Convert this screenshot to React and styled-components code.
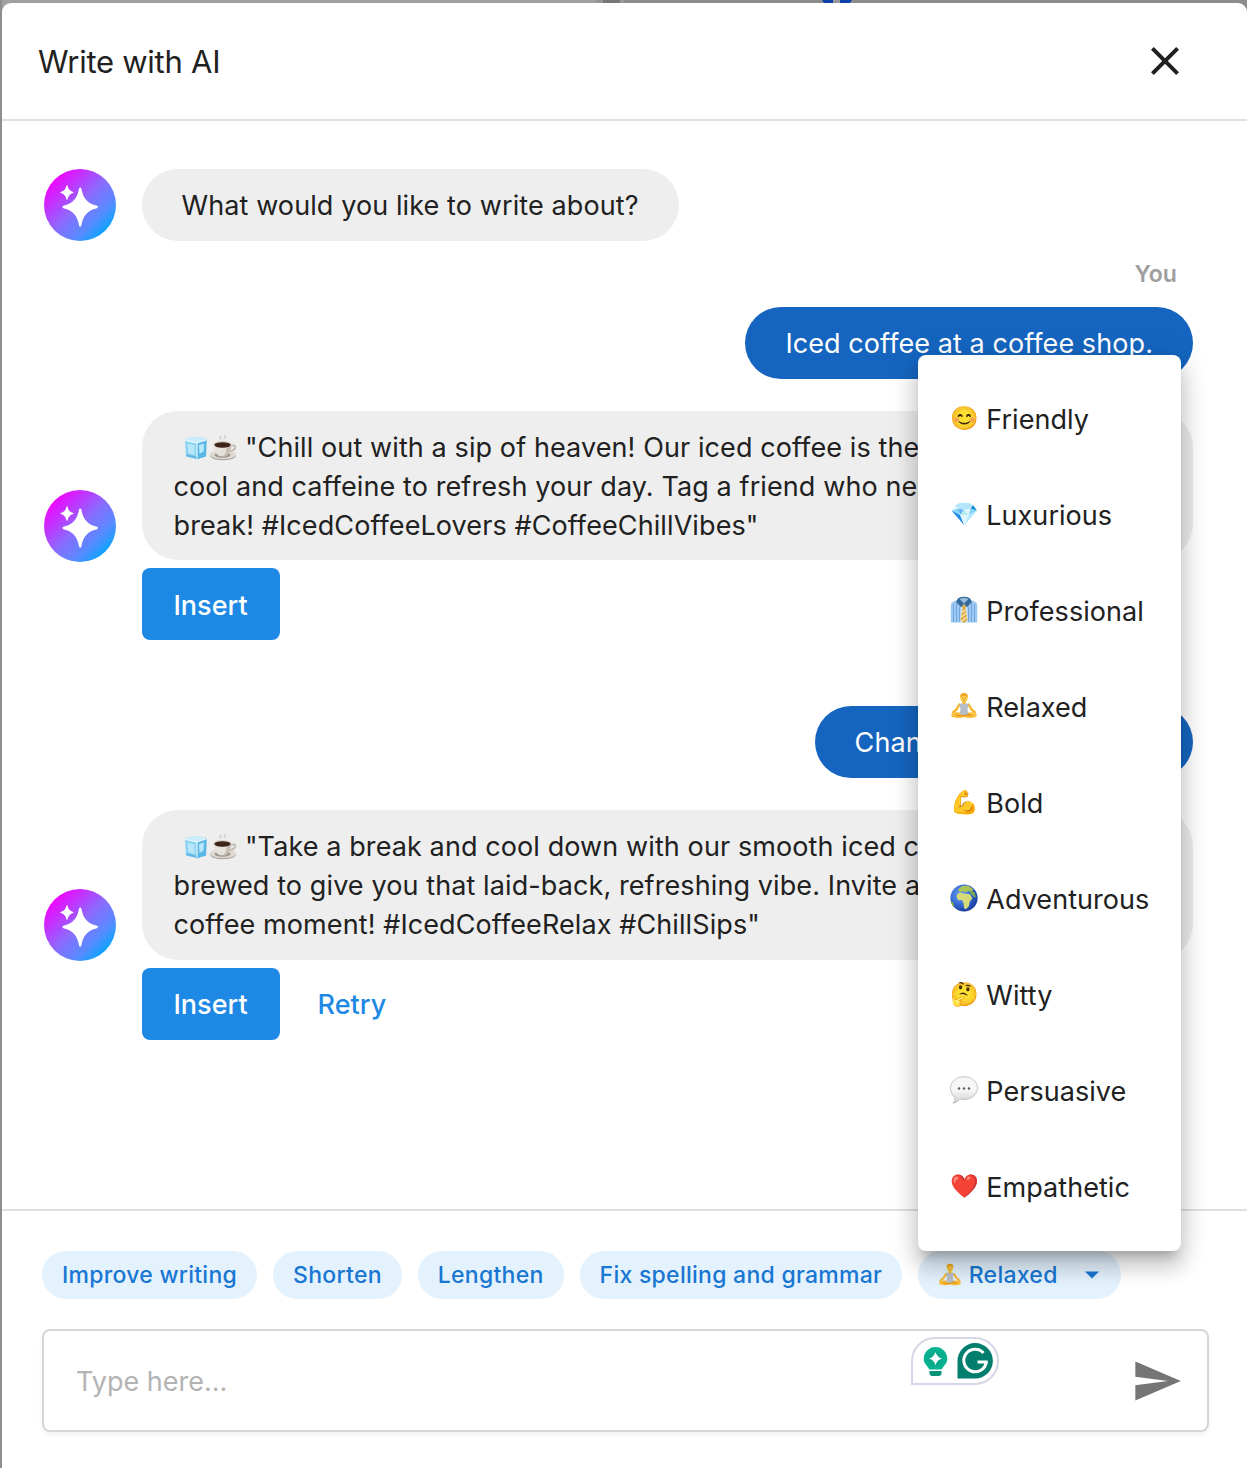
import React from "react";
import styled, { createGlobalStyle } from "styled-components";

const GlobalStyle = createGlobalStyle`
  * { box-sizing: border-box; }
  body {
    margin: 0;
    font-family: Inter, "Noto Color Emoji", sans-serif;
    color: #212121;
    overflow: hidden;
  }
  button { font: inherit; border: 0; cursor: pointer; }
`;

const Backdrop = styled.div`
  height: 1468px;
  padding: 3px 0 0 2px;
  background:
    linear-gradient(#999, #999) 833px 0 / 7px 3px no-repeat,
    radial-gradient(circle at 837px -9px, #0b41a8 17px, transparent 18px),
    linear-gradient(90deg, #8e8e8e 0 2px, #a0a0a0 2px 596px, #959595 596px 603px, #777 603px 620px, #989898 620px 624px, #8c8c8c 624px);
`;

const Dialog = styled.section`
  display: flex;
  flex-direction: column;
  height: 100%;
  background: #fff;
  border-radius: 9px 9px 0 0;
  overflow: hidden;
`;

const Header = styled.header`
  display: flex;
  align-items: center;
  justify-content: space-between;
  height: 118px;
  padding: 0 58px 0 36px;
  border-bottom: 2px solid #e0e0e0;
`;

const Title = styled.h1`
  margin: 0;
  font-size: 31px;
  font-weight: 400;
  letter-spacing: -0.26px;
`;

const CloseButton = styled.button`
  display: flex;
  padding: 0;
  background: none;
  color: #212121;
`;

const Thread = styled.main`
  flex: 1;
  display: flex;
  flex-direction: column;
  padding: 48px 54px 0 41.5px;
`;

const BotRow = styled.div`
  display: flex;
  align-items: center;
  gap: 26px;
  margin-top: ${(p) => (p.$first ? 0 : 32)}px;
`;

const BotColumn = styled.div`
  display: flex;
  flex-direction: column;
  align-items: flex-start;
  flex: 1;
`;

const Bubble = styled.div`
  align-self: ${(p) => (p.$wide ? "stretch" : "flex-start")};
  padding: ${(p) => (p.$wide ? "17px 32px 15.4px" : "16.5px 40px")};
  border-radius: 36px;
  background: #eee;
  font-size: 27px;
  line-height: 39px;
  letter-spacing: 0.1px;
  white-space: pre;
`;

const UserGroup = styled.div`
  display: flex;
  flex-direction: column;
  align-items: flex-end;
`;

const Sender = styled.div`
  height: 66px;
  padding-right: 16px;
  font-size: 23px;
  font-weight: 600;
  line-height: 66px;
  letter-spacing: 0.1px;
  color: #9e9e9e;
`;

const UserBubble = styled.div`
  padding: 2px 40px 0;
  border-radius: 36px;
  background: #1565c0;
  color: #fff;
  font-size: 27px;
  line-height: 70px;
  letter-spacing: 0.08px;
`;

const Actions = styled.div`
  display: flex;
  gap: 6px;
  margin-top: 8px;
`;

const ActionButton = styled.button`
  && {
    height: 72px;
    padding: 2.4px 32px 0;
    border-radius: 8px;
    background: ${(p) => (p.$primary ? "#1e88e5" : "transparent")};
    color: ${(p) => (p.$primary ? "#fff" : "#1e88e5")};
    font-size: 27px;
    font-weight: 500;
  }
`;

const Emoji = styled.span`
  display: inline-block;
  width: 28px;
  font-family: "Noto Color Emoji", sans-serif;
  font-size: 23px;
  line-height: 1;
  letter-spacing: 0;
  text-align: center;
`;

const Glyph = styled.svg`
  flex: none;
  width: ${(p) => p.$size}px;
  height: ${(p) => p.$size}px;
  vertical-align: ${(p) => p.$drop || 0}px;
`;

const Footer = styled.footer`
  height: 259px;
  padding: 40px 38px 0 40px;
  border-top: 2px solid #e0e0e0;
`;

const Chips = styled.div`
  display: flex;
  gap: 16px;
`;

const Chip = styled.button`
  && {
    display: flex;
    align-items: center;
    height: 48px;
    padding: 0 ${(p) => (p.$select ? 22 : 20)}px 0 20px;
    border-radius: 24px;
    background: #e3f2fd;
    color: #1976d2;
    font-size: 23px;
    font-weight: 500;
    letter-spacing: 0.27px;
    white-space: nowrap;
  }
`;

const ToneLabel = styled.span`
  margin: 0 27px 0 6.5px;
`;

const ToneSelect = styled.div`
  position: relative;
`;

const Menu = styled.ul`
  position: absolute;
  left: 0;
  bottom: 100%;
  width: 263px;
  margin: 0;
  padding: 16px 0;
  list-style: none;
  background: #fff;
  border-radius: 8px;
  box-shadow:
    0 10px 10px -6px rgba(0, 0, 0, 0.2),
    0 16px 20px 2px rgba(0, 0, 0, 0.14),
    0 6px 28px 4px rgba(0, 0, 0, 0.12);
`;

const MenuItem = styled.li`
  display: flex;
  align-items: center;
  gap: 8px;
  height: 96px;
  padding: 0 24px 0 32px;
  font-size: 27px;
  letter-spacing: 0.05px;

  ${Emoji}, ${Glyph} {
    margin-bottom: 2px;
  }
`;

const Composer = styled.div`
  position: relative;
  display: flex;
  align-items: center;
  justify-content: space-between;
  height: 103px;
  margin-top: 30px;
  padding: 0 24px 0 32px;
  border: 2px solid #d6d6d6;
  border-radius: 8px;
  box-shadow: 0 3px 5px rgba(0, 0, 0, 0.05);
`;

const Placeholder = styled.span`
  padding-top: 1px;
  font-size: 27px;
  color: #b3b3b3;
`;

const Assistant = styled.div`
  position: absolute;
  left: 867px;
  top: 6px;
  display: flex;
  width: 88px;
  height: 48px;
  border: 2px solid #d5d7e6;
  border-radius: 24px 24px 24px 0;
  background: #fff;
`;

function Avatar({ id }) {
  return (
    <svg width="72" height="72" viewBox="0 0 72 72">
      <defs>
        <linearGradient id={id} x1="0.12" y1="0.12" x2="0.88" y2="0.88">
          <stop offset="0" stopColor="#f500ff" />
          <stop offset="0.5" stopColor="#8a6cff" />
          <stop offset="0.78" stopColor="#568cff" />
          <stop offset="1" stopColor="#00a8ff" />
        </linearGradient>
      </defs>
      <circle cx="36" cy="36" r="36" fill={`url(#${id})`} />
      <path
        fill="#fff"
        d="M35.1 19.2Q36.2 17.6 37.3 19.2C39 29 43 34.4 53 36.8Q55 38 53 39.2C43 41.4 39 47 37.3 56.8Q36.2 58.6 35.1 56.8C33.4 47 29.4 41.4 19.4 39.2Q17.4 38 19.4 36.8C29.4 34.4 33.4 29 35.1 19.2Z"
      />
      <path
        fill="#fff"
        d="M22.5 16.6Q23 15.8 23.5 16.6C24.3 20.4 26 22.2 29.2 23Q30.2 23.5 29.2 24C26 24.8 24.3 26.8 23.5 30.4Q23 31.2 22.5 30.4C21.7 26.8 20 24.8 16.8 24Q15.8 23.5 16.8 23C20 22.2 21.7 20.4 22.5 16.6Z"
      />
    </svg>
  );
}

const CloseIcon = () => (
  <svg width="48" height="48" viewBox="0 0 24 24" fill="currentColor">
    <path d="M19 6.41L17.59 5 12 10.59 6.41 5 5 6.41 10.59 12 5 17.59 6.41 19 12 13.41 17.59 19 19 17.59 13.41 12z" />
  </svg>
);

const SendIcon = () => (
  <svg width="52" height="52" viewBox="0 0 24 24" fill="#757575">
    <path d="M2.01 21L23 12 2.01 3 2 10l15 2-15 2z" />
  </svg>
);

const CaretIcon = () => (
  <svg width="14" height="8" viewBox="0 0 14 8" fill="#1976d2">
    <path d="M0 0.5h14l-7 7z" />
  </svg>
);

const IceIcon = () => (
  <Glyph $size={28} $drop={-5} viewBox="-1 0 28 28" role="img" aria-label="🧊">
    <path fill="#8dd4f3" d="M3.500 5Q13 2.500 24 4.500l.8 1-.8 17L15 25.200 4 22.500 2.900 6Z" />
    <path fill="#c9edfb" d="M3.500 5Q13 2.500 24 4.500l.5 1.500-9.500 3L3 6.500Z" />
    <path fill="#5ab6e5" d="M15 9l9.500-3-.5 16.500-9 2.700Z" />
    <path fill="#b6e8fa" d="M5.500 9.500l7 2v9.500l-6-1.800ZM17 11l5-1.500-.4 8L17.500 20Z" />
    <path fill="none" stroke="#e9fafe" strokeWidth="1.100" d="M3.500 6.500L15 9v15.500M15 9l9-3" />
    <path fill="#4da9dc" d="M4.500 20l10 2.500v2.200L4.200 22.300Z" opacity=".65" />
  </Glyph>
);

const CoffeeIcon = () => (
  <Glyph $size={28} $drop={-5} viewBox="0 -1 28 28" role="img" aria-label="☕">
    <path fill="none" stroke="#d0cfce" strokeWidth="1.400" d="M12.500 4.500q-3-2 0-3.500M14.500 4q3-2 .5-4" />
    <ellipse cx="14" cy="20.500" rx="13" ry="4.800" fill="#b2aaa1" />
    <ellipse cx="14" cy="19.500" rx="13" ry="4.500" fill="#dfdad3" />
    <ellipse cx="13.500" cy="20" rx="8" ry="2.800" fill="#9e958c" />
    <path fill="none" stroke="#c4bdb4" strokeWidth="2" d="M22 11q5-1.500 4.300 1.500-.8 3-6 3.500" />
    <path fill="#e5e1db" d="M4.500 9.500C5 15 7 20 11 21.200h5C20 20 22 15 22.600 9.500Z" />
    <path fill="#c5beb5" d="M17.500 13C17.500 17 16 20 13.500 21.200H16C20 20 22 15 22.600 9.500Z" />
    <ellipse cx="13.500" cy="9.500" rx="9.100" ry="3.500" fill="#d8d2ca" />
    <ellipse cx="13.500" cy="10" rx="8.100" ry="2.700" fill="#3d2318" />
  </Glyph>
);

const LotusIcon = ({ size }) => (
  <Glyph $size={size} viewBox="0 0 28 28" role="img" aria-label="🧘">
    <g fill="none" stroke="#f5b72f" strokeWidth="2.400" strokeLinecap="round" strokeLinejoin="round">
      <path d="M9.500 12.500L6.500 17.500 3 20.500M18.500 12.500l3 5 3.500 3" />
    </g>
    <path fill="#fbbd35" d="M2 22c4-2.500 8-2 12-.2 4-1.800 8-2.300 12 .2q2 1.500-.5 3C20 26.500 17 26 14 25c-3 1-6 1.500-11.500 0Q0 23.500 2 22Z" />
    <path fill="#b9bdc5" d="M9.300 12.500Q11 11 14 11t4.700 1.500L17.500 17l.8 5q-4.300 2.200-8.600 0l.8-5Z" />
    <path fill="none" stroke="#cf7e1b" strokeWidth=".8" d="M6 23q8 2.400 13-1M22 23.500l-5-1" />
    <path fill="#f5b72f" d="M12.200 8h3.600v3.300q-1.800 1.500-3.600 0Z" />
    <ellipse cx="14" cy="5.800" rx="3.700" ry="4.300" fill="#ffce4a" />
    <path fill="#eea61e" d="M10.200 5.500Q9.600 1 14 .900T17.800 5.500Q16 3.700 14 3.800T10.200 5.500Z" />
    <path fill="none" stroke="#8f5511" strokeWidth=".6" d="M12 6h1.200M14.800 6H16M13 8.300h2" />
  </Glyph>
);

const ShirtIcon = () => (
  <Glyph $size={28} viewBox="0 0 28 28" role="img" aria-label="👔">
    <path fill="#9cc8f2" d="M8 3.500h12l5.500 2.500Q27.300 7 27.300 10v16.500H.8V10Q.8 7 2.500 6Z" />
    <path fill="none" stroke="#72a6df" d="M3.500 8v18M6.500 6v20M9.500 11v15M18.500 11v15M21.500 6v20M24.500 8v18" />
    <path fill="#cfe5f8" d="M10.800 11h6.400l.8 15.500H10Z" />
    <path fill="#e0aa42" d="M12 8.500h4l-.5 4 2 11.500L14 27l-3.500-3 2-11.500Z" />
    <path stroke="#faeabb" strokeWidth="1.300" d="M12 16.500l3.500-2.500M11.500 21l5-4M12 25l5-4" />
    <path fill="#35699b" d="M8 2.200Q14-.500 20 2.200L21.800 6 17 11.200 14 7.800 11 11.200 6.200 6Z" />
    <path fill="#99bfdc" d="M9.500 3Q14 .900 18.500 3L14 7.500Z" />
  </Glyph>
);

const SpeechIcon = () => (
  <Glyph $size={28} viewBox="0 0 28 28" role="img" aria-label="💬">
    <defs>
      <linearGradient id="speech" x1="0" y1="0" x2="0" y2="1">
        <stop offset="0.500" stopColor="#f7f7f8" />
        <stop offset="1" stopColor="#cfcfd3" />
      </linearGradient>
    </defs>
    <path
      fill="url(#speech)"
      stroke="#bdbdc1"
      strokeWidth=".9"
      d="M14 .7C21.500 .7 27.500 5.700 27.500 12S21.500 23.500 14 23.500q-2.200 0-4.300-.6Q7 27 3 27.200 5.300 24.800 5 21.500 .5 17.800 .5 12C.5 5.700 6.500 .7 14 .7Z"
    />
    <g fill="#5c5c62">
      <circle cx="9" cy="12.500" r="1.200" />
      <circle cx="14" cy="12.500" r="1.200" />
      <circle cx="19" cy="12.500" r="1.200" />
    </g>
  </Glyph>
);

const GlobeIcon = () => (
  <Glyph $size={28} viewBox="0 0 28 28" role="img" aria-label="🌍">
    <defs>
      <radialGradient id="globe" cx="0.38" cy="0.36" r="0.65">
        <stop offset="0" stopColor="#6ba5f5" />
        <stop offset="0.600" stopColor="#3568d2" />
        <stop offset="1" stopColor="#1d3f9f" />
      </radialGradient>
    </defs>
    <circle cx="14" cy="14" r="13.600" fill="url(#globe)" />
    <path fill="#a9c354" d="M8 5.500l4-3.500 6-.4 5 3.400-1 3-4-1-2 1.500-3-1.500-3 1.500Z" />
    <path fill="#d5d978" d="M6.500 12.500Q7 9 11 8.700l5 1.100 4 .4 2.300 4.300-2.800 3.500-.5 4-3 3.300-2-1.300-.5-5-1.500-3-4 .2Z" />
    <path fill="#7bab4d" d="M20 6l4.500 2.500 1.500 5-2.500-.7L20.500 9ZM.8 17l2.200 1 1.300 4-1 1.200Q1.200 20.500.8 17Z" />
  </Glyph>
);

const AssistantIcons = () => (
  <svg width="84" height="44" viewBox="1 1 84 44">
    <defs>
      <radialGradient id="bulb">
        <stop offset="0" stopColor="#0a9f84" />
        <stop offset="1" stopColor="#08b592" />
      </radialGradient>
    </defs>
    <path
      fill="url(#bulb)"
      d="M23.500 9a11.800 11.800 0 0 1 11.800 11.800c0 4.600-3 6.600-4.700 9.200-.7 1-1.200 1.500-2 1.500h-10.200c-.8 0-1.300-.5-2-1.500-1.700-2.600-4.700-4.600-4.700-9.200A11.800 11.800 0 0 1 23.500 9Z"
    />
    <path fill="#059377" d="M17.500 33h12v2q0 3-3 3h-6q-3 0-3-3z" />
    <path fill="#fff" d="M23.500 14q1.500 5.300 6.600 6.600q-5.100 1.300-6.600 6.600q-1.500-5.300-6.600-6.600q5.100-1.300 6.600-6.600z" />
    <path fill="#027e6f" d="M45.500 40.500V23A17.700 17.700 0 1 1 63.200 40.500Z" />
    <g fill="none" stroke="#fff" strokeWidth="3">
      <path d="M71.500 14.900A11.300 11.300 0 1 0 74.300 24" />
      <path d="M65.500 24h10.200" />
      <path d="M73 24.500v5.500" strokeWidth="2" />
    </g>
  </svg>
);

const tones = [
  [<Emoji>😊</Emoji>, "Friendly"],
  [<Emoji>💎</Emoji>, "Luxurious"],
  [<ShirtIcon />, "Professional"],
  [<LotusIcon size={28} />, "Relaxed"],
  [<Emoji>💪</Emoji>, "Bold"],
  [<GlobeIcon />, "Adventurous"],
  [<Emoji>🤔</Emoji>, "Witty"],
  [<SpeechIcon />, "Persuasive"],
  [<Emoji>❤️</Emoji>, "Empathetic"],
];

const chips = ["Improve writing", "Shorten", "Lengthen", "Fix spelling and grammar"];

function Answer({ id, lines, retry }) {
  return (
    <BotRow>
      <Avatar id={id} />
      <BotColumn>
        <Bubble $wide>
          {" "}
          <IceIcon />
          <CoffeeIcon />
          {" " + lines.join("\n")}
        </Bubble>
        <Actions>
          <ActionButton $primary>Insert</ActionButton>
          {retry && <ActionButton>Retry</ActionButton>}
        </Actions>
      </BotColumn>
    </BotRow>
  );
}

function UserMessage({ sender, text }) {
  return (
    <UserGroup>
      <Sender>{sender}</Sender>
      <UserBubble>{text}</UserBubble>
    </UserGroup>
  );
}

export default function App() {
  return (
    <Backdrop>
      <GlobalStyle />
      <Dialog>
        <Header>
          <Title>Write with AI</Title>
          <CloseButton aria-label="Close">
            <CloseIcon />
          </CloseButton>
        </Header>
        <Thread>
          <BotRow $first>
            <Avatar id="avatar-1" />
            <BotColumn>
              <Bubble>What would you like to write about?</Bubble>
            </BotColumn>
          </BotRow>
          <UserMessage sender="You" text="Iced coffee at a coffee shop." />
          <Answer
            id="avatar-2"
            lines={[
              '"Chill out with a sip of heaven! Our iced coffee is the perfect blend of',
              "cool and caffeine to refresh your day. Tag a friend who needs a coffee",
              'break! #IcedCoffeeLovers #CoffeeChillVibes"',
            ]}
          />
          <UserMessage sender="" text="Change tone to relaxed" />
          <Answer
            id="avatar-3"
            retry
            lines={[
              '"Take a break and cool down with our smooth iced coffee, perfectly',
              "brewed to give you that laid-back, refreshing vibe. Invite a friend for a",
              'coffee moment! #IcedCoffeeRelax #ChillSips"',
            ]}
          />
        </Thread>
        <Footer>
          <Chips>
            {chips.map((label) => (
              <Chip key={label}>{label}</Chip>
            ))}
            <ToneSelect>
              <Chip $select>
                <LotusIcon size={24} />
                <ToneLabel>Relaxed</ToneLabel>
                <CaretIcon />
              </Chip>
              <Menu>
                {tones.map(([icon, label]) => (
                  <MenuItem key={label}>
                    {icon}
                    {label}
                  </MenuItem>
                ))}
              </Menu>
            </ToneSelect>
          </Chips>
          <Composer>
            <Placeholder>Type here...</Placeholder>
            <SendIcon />
            <Assistant>
              <AssistantIcons />
            </Assistant>
          </Composer>
        </Footer>
      </Dialog>
    </Backdrop>
  );
}
